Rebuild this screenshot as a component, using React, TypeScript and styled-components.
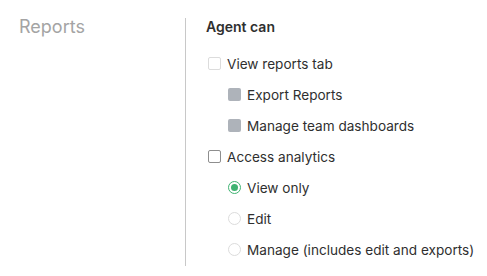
import React from "react";
import styled, { createGlobalStyle, css } from "styled-components";

const GlobalStyle = createGlobalStyle`
  html, body {
    margin: 0;
    padding: 0;
    background: #ffffff;
  }
  body {
    font-family: Inter, "Noto Sans", "Liberation Sans", sans-serif;
    -webkit-font-smoothing: antialiased;
  }
`;

const Page = styled.div`
  display: flex;
  align-items: flex-start;
  width: 487px;
  height: 276px;
  padding-top: 18px;
  box-sizing: border-box;
`;

const SideTitle = styled.div`
  width: 166px;
  padding-left: 19px;
  font-size: 18px;
  line-height: 17px;
  color: #a4a4a4;
`;

const Panel = styled.div`
  border-left: 1px solid #c8c8c8;
  padding-left: 20px;
  padding-bottom: 1px;
  display: flex;
  flex-direction: column;
`;

const Heading = styled.div`
  font-size: 14px;
  font-weight: 600;
  color: #2f2f2f;
  line-height: 17px;
  margin-bottom: 13px;
`;

const Row = styled.label<{ $indent?: boolean }>`
  display: flex;
  align-items: center;
  gap: 6px;
  height: 31px;
  flex-shrink: 0;
  padding-left: ${(p) => (p.$indent ? "22px" : "2px")};
  font-size: 13.6px;
  color: #2f2f2f;
`;

const Box = styled.span<{ $variant: "off" | "disabled" | "filled" }>`
  width: 13px;
  height: 13px;
  box-sizing: border-box;
  border-radius: 2px;
  flex-shrink: 0;
  ${(p) =>
    p.$variant === "off" &&
    css`
      border: 1px solid #8e8e8e;
      background: #fff;
    `}
  ${(p) =>
    p.$variant === "disabled" &&
    css`
      border: 1px solid #dcdcdc;
      background: #fff;
    `}
  ${(p) =>
    p.$variant === "filled" &&
    css`
      background: #aeb3ba;
    `}
`;

const Radio = styled.span<{ $checked?: boolean }>`
  width: 13px;
  height: 13px;
  box-sizing: border-box;
  border-radius: 50%;
  flex-shrink: 0;
  display: flex;
  align-items: center;
  justify-content: center;
  border: 1px solid ${(p) => (p.$checked ? "#3fb372" : "#dcdcdc")};
  background: #fff;
  &::after {
    content: "";
    display: ${(p) => (p.$checked ? "block" : "none")};
    width: 7px;
    height: 7px;
    border-radius: 50%;
    background: #3fb372;
  }
`;

export default function App() {
  return (
    <>
      <GlobalStyle />
      <Page>
        <SideTitle>Reports</SideTitle>
        <Panel>
          <Heading>Agent can</Heading>
          <Row>
            <Box $variant="disabled" />
            View reports tab
          </Row>
          <Row $indent>
            <Box $variant="filled" />
            Export Reports
          </Row>
          <Row $indent>
            <Box $variant="filled" />
            Manage team dashboards
          </Row>
          <Row>
            <Box $variant="off" />
            Access analytics
          </Row>
          <Row $indent>
            <Radio $checked />
            View only
          </Row>
          <Row $indent>
            <Radio />
            Edit
          </Row>
          <Row $indent>
            <Radio />
            Manage (includes edit and exports)
          </Row>
        </Panel>
      </Page>
    </>
  );
}
